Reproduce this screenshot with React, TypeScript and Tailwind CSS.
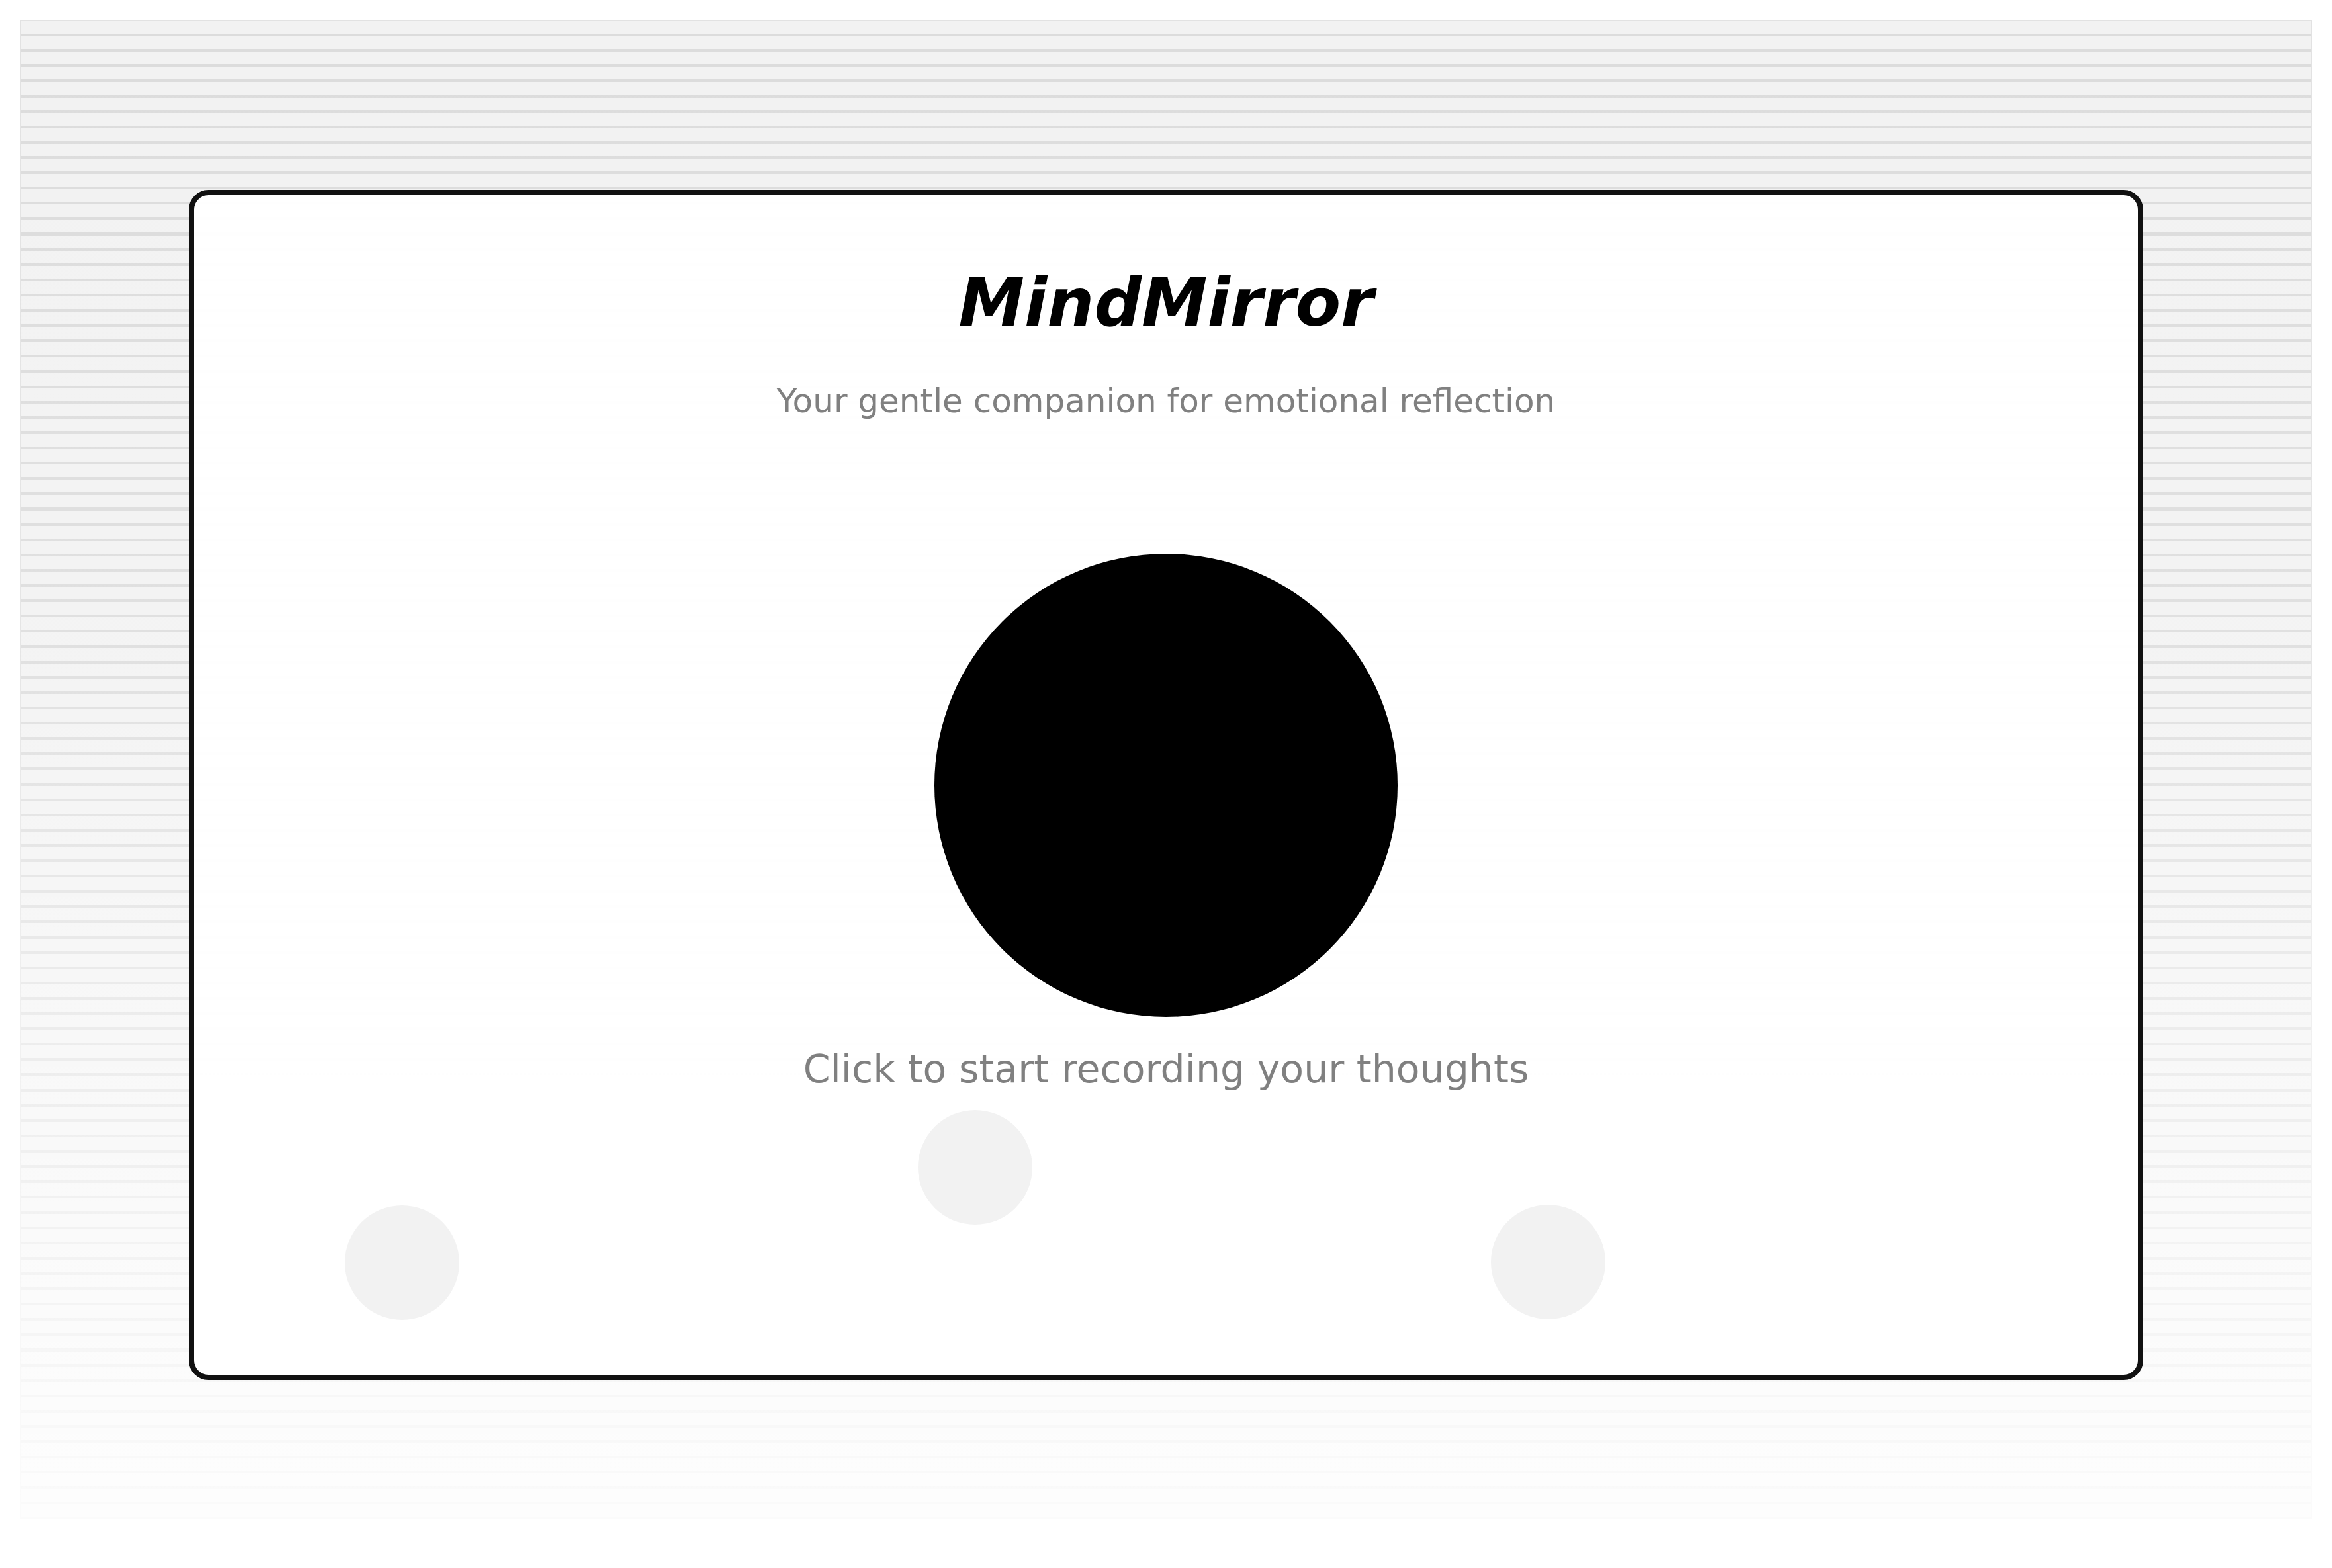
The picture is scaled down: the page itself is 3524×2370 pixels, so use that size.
import React from "react";

const bubbles = [
  { id: 1, className: "left-[228px] top-[1527px]" },
  { id: 2, className: "left-[1094px] top-[1383px]" },
  { id: 3, className: "left-[1960px] top-[1526px]" },
];

const App: React.FC = () => {
  return (
    <div className="min-h-screen bg-white px-[30px] pt-[30px] pb-[74px] font-['DejaVu_Sans',sans-serif]">
      <div className="h-[2266px] border-2 border-transparent pt-[255px] [background:linear-gradient(to_bottom,rgba(255,255,255,0)_0%,rgba(255,255,255,0.12)_42%,rgba(255,255,255,0.5)_70%,rgba(255,255,255,0.88)_100%)_border-box,repeating-linear-gradient(to_bottom,#f2f2f2_0px,#f2f2f2_19px,#dcdcdc_19px,#dcdcdc_23.11px)_padding-box,linear-gradient(#e2e2e2,#e2e2e2)_border-box]">
        <div className="relative mx-auto flex h-[1799px] w-[2954px] flex-col items-center rounded-[30px] border-[8px] border-[#111] bg-white/95 pt-[103px]">
          {bubbles.map((b) => (
            <div
              key={b.id}
              className={`absolute h-[173px] w-[173px] rounded-full bg-[#f2f2f2] ${b.className}`}
            />
          ))}
          <h1 className="relative text-[100px] leading-[120px] font-bold italic text-black">
            MindMirror
          </h1>
          <p className="relative mt-[51px] text-[50px] leading-[75px] text-[#808080]">
            Your gentle companion for emotional reflection
          </p>
          <button className="relative mt-[193px] h-[700px] w-[700px] rounded-full bg-black" />
          <p className="relative mt-[36px] text-[58.5px] leading-[87px] text-[#808080]">
            Click to start recording your thoughts
          </p>
        </div>
      </div>
    </div>
  );
};

export default App;
